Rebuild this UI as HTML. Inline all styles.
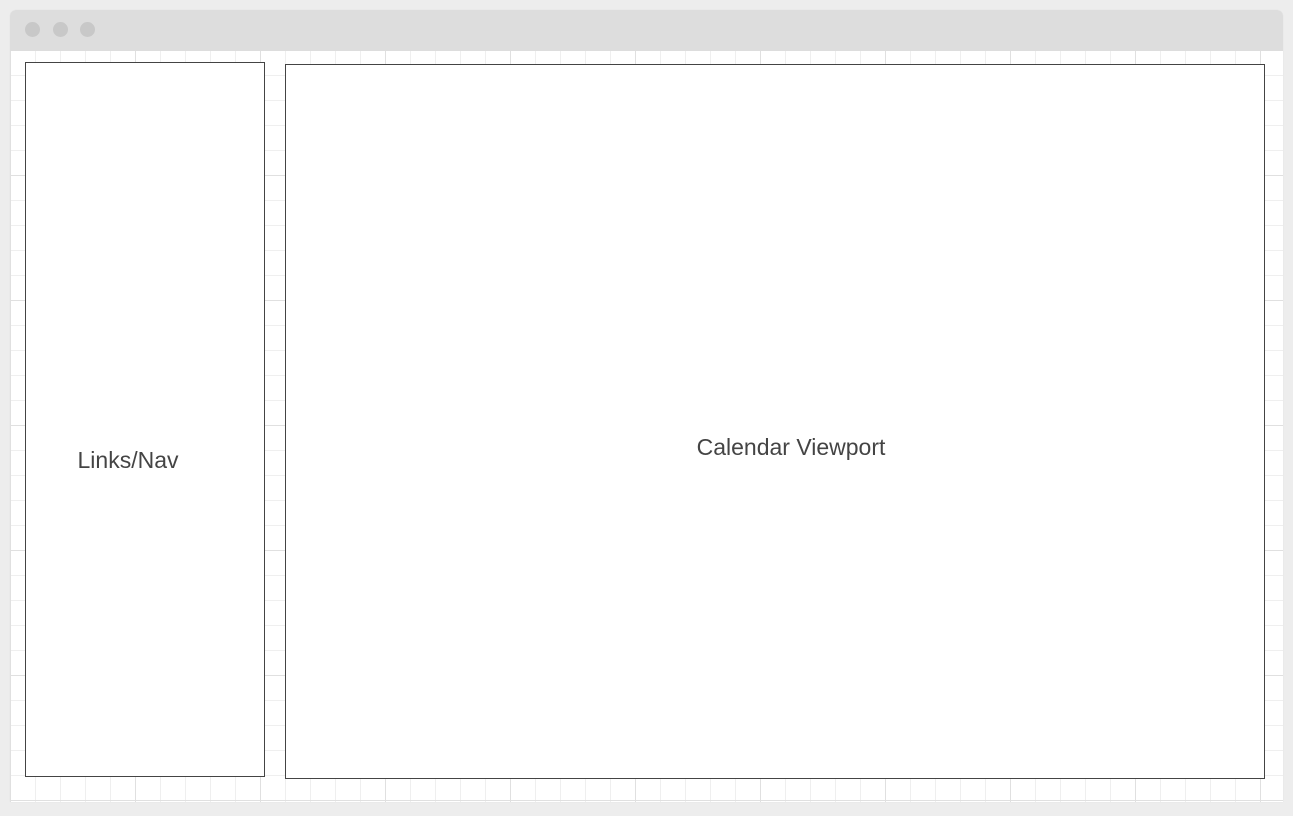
<!DOCTYPE html>
<html><head><style>
body{margin:0;width:1293px;height:816px;background:#ededed;position:relative;overflow:hidden;font-family:"Liberation Sans",sans-serif}
.win{position:absolute;left:10px;top:10px;width:1273px;height:792px;background:#fff;border-radius:6px 6px 0 0;overflow:hidden;box-shadow:0 0 1px rgba(0,0,0,.08)}
.bar{position:absolute;left:0;top:0;right:0;height:41px;background:#dddddd}
.dot{position:absolute;top:12px;width:15px;height:15px;border-radius:50%;background:#c8c8c8}
.grid{position:absolute;left:0;top:41px;right:0;bottom:0;
background-image:linear-gradient(#e0e0e0 1px,transparent 1px),linear-gradient(90deg,#e0e0e0 1px,transparent 1px),linear-gradient(#efefef 1px,transparent 1px),linear-gradient(90deg,#efefef 1px,transparent 1px);
background-size:125px 125px,125px 125px,25px 25px,25px 25px;
background-position:0 -1px,0 0,0 -1px,0 0}
.box{position:absolute;background:#fff;border:1px solid #444;box-sizing:border-box;color:#444;font-size:23px;display:flex;align-items:center;justify-content:center}
</style></head><body>
<div class="win">
<div class="bar"><div class="dot" style="left:15px"></div><div class="dot" style="left:43px"></div><div class="dot" style="left:70px"></div></div>
<div class="grid"></div>
</div>
<div class="box" style="left:25px;top:62px;width:240px;height:715px;padding-right:34px;padding-top:82px">Links/Nav</div>
<div class="box" style="left:285px;top:64px;width:980px;height:715px;padding-top:52px;padding-left:32px">Calendar Viewport</div>
</body></html>
